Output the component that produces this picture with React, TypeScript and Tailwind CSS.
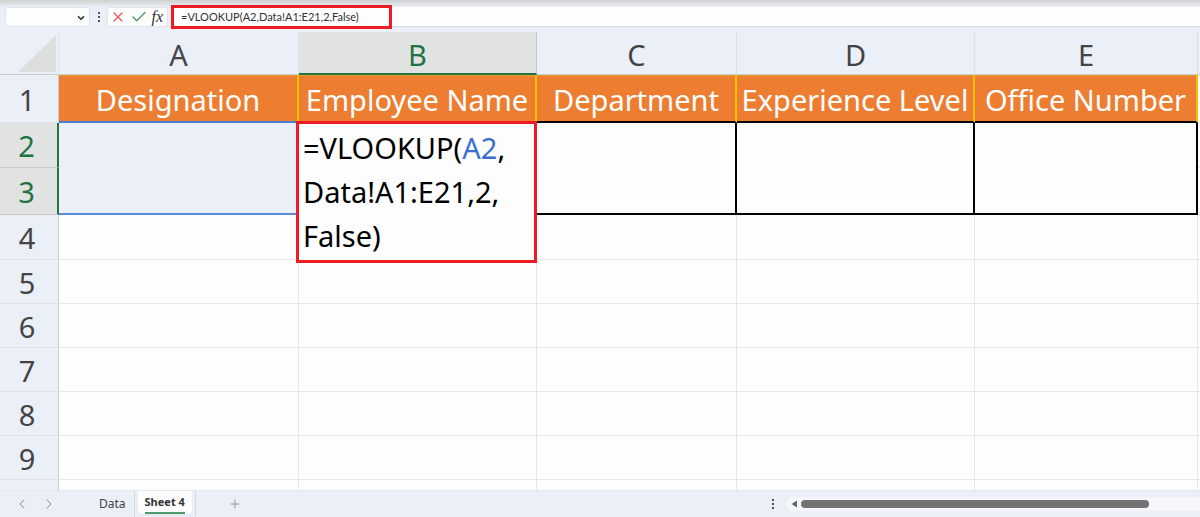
import { Check, ChevronDown, ChevronLeft, ChevronRight, Plus, X } from "lucide-react";

const letters = ["A", "B", "C", "D", "E"];
const titles = ["Designation", "Employee Name", "Department", "Experience Level", "Office Number"];
const emptyRows = [
  { n: "4", h: "h-[45px]" },
  { n: "5", h: "h-11" },
  { n: "6", h: "h-11" },
  { n: "7", h: "h-11" },
  { n: "8", h: "h-11" },
  { n: "9", h: "h-11" },
  { n: "", h: "h-11" },
];

const rowHead = "border-r border-b border-r-[#c9ccce] border-b-[#dfe3e8] bg-[#eaeff8] pt-0.5 pr-1 pb-0 pl-0 text-center font-normal text-[#444]";
const rowHeadActive = "border-b border-b-[#c8cbc9] border-r-2 border-r-[#217346] bg-[#e1e3e2] pt-0.5 pr-1 pb-0 pl-0 text-center font-normal text-[#217346]";

function Dots() {
  return (
    <svg viewBox="0 0 4 12" className="h-3 w-1 shrink-0" fill="#555" aria-hidden="true">
      <rect x="1" y="1" width="2" height="2" />
      <rect x="1" y="5" width="2" height="2" />
      <rect x="1" y="9" width="2" height="2" />
    </svg>
  );
}

function FormulaBar() {
  return (
    <div className="flex shrink-0 items-start bg-[#eaeff8] pb-[5px] pl-[5px]">
      <div className="relative h-5 w-[85px] shrink-0">
        <select aria-label="Name box" className="h-5 w-full appearance-none rounded-[3px] border border-[#e0e3e8] bg-[#fdfdfd]">
          <option></option>
        </select>
        <ChevronDown className="pointer-events-none absolute top-1.5 right-1 size-2.5 text-[#333]" strokeWidth={4} />
      </div>
      <div className="flex h-5 w-[17px] shrink-0 items-center justify-center">
        <Dots />
      </div>
      <div className="flex h-5 w-[61px] shrink-0 items-center justify-between rounded-[3px] border border-[#e0e3e8] bg-[#fdfdfd] px-0.5">
        <button aria-label="Cancel" className="text-[#e8505b]">
          <X className="size-4" strokeWidth={1.8} />
        </button>
        <button aria-label="Enter" className="text-[#4a9a6a]">
          <Check className="size-[18px]" strokeWidth={1.8} />
        </button>
        <button aria-label="Insert function" className="pr-0.5 font-['Liberation_Serif',serif] text-base leading-4 text-[#333] italic">
          fx
        </button>
      </div>
      <div className="relative ml-[3px] min-w-0 flex-1">
        <input
          aria-label="Formula"
          defaultValue="=VLOOKUP(A2,Data!A1:E21,2,False)"
          className="block h-5 w-full border-b border-[#d8dbe0] bg-[#fdfdfd] pl-2.5 font-['Lato',sans-serif] text-[11px] text-[#333] outline-none"
        />
        <div className="pointer-events-none absolute -top-0.5 left-0 h-6 w-[221px] border-[3px] border-[#ed1c24]" />
      </div>
    </div>
  );
}

function CellEditor() {
  return (
    <div className="absolute -top-0.5 -left-[3px] z-10 h-[142px] w-[241px] border-[3px] border-[#ed1c24] bg-[#fdfdfd] pt-0.5 pl-1 text-left text-[29px] leading-11 whitespace-nowrap text-black">
      <div>
        =VLOOKUP(<span className="text-[#3a6fd0]">A2</span>,
      </div>
      <div>Data!A1:E21,2,</div>
      <div>False)</div>
    </div>
  );
}

function Sheet() {
  return (
    <div className="min-h-0 flex-1 overflow-hidden bg-[#fdfdfd]">
      <table className="w-full table-fixed border-separate border-spacing-0 text-[29px] leading-10">
        <colgroup>
          <col className="w-[59px]" />
          <col className="w-[240px]" />
          <col className="w-[238px]" />
          <col className="w-[200px]" />
          <col className="w-[238px]" />
          <col className="w-[223px]" />
          <col />
        </colgroup>
        <thead>
          <tr className="h-[43px]">
            <th className="border-r border-b border-r-[#dfe3e8] border-b-[#c9ccce] bg-[#eaeff8] p-0">
              <svg viewBox="0 0 58 42" className="block h-[42px] w-full" aria-hidden="true">
                <path d="M56 3V40H18Z" fill="#dcdfde" />
              </svg>
            </th>
            {letters.map((l) => (
              <th
                key={l}
                scope="col"
                className={
                  l === "B"
                    ? "border-r border-b-2 border-r-[#c9ccce] border-b-[#217346] bg-[#e1e3e2] px-0 pt-1 pb-0 font-normal text-[#217346]"
                    : "border-r border-b border-r-[#dce0e6] border-b-[#c9ccce] bg-[#eaeff8] px-0 pt-1 pb-0 font-normal text-[#444]"
                }
              >
                <span className="block leading-9">{l}</span>
              </th>
            ))}
            <th className="border-b border-[#c9ccce] bg-[#eaeff8] p-0" />
          </tr>
        </thead>
        <tbody>
          <tr className="h-12">
            <th scope="row" className={rowHead}>1</th>
            {titles.map((t, i) => (
              <td
                key={t}
                className={
                  "border-t border-r-2 border-b-2 border-t-[#e0a02a] border-r-[#ffc000] bg-[#ed7d31] px-0 pt-0.5 pb-0 text-center whitespace-nowrap text-white " +
                  (i === 0 ? "border-b-[#4a7fd0]" : "border-b-black")
                }
              >
                {t}
              </td>
            ))}
            <td className="border-b border-[#e6e6e6] p-0" />
          </tr>
          <tr className="h-[45px]">
            <th scope="row" className={rowHeadActive}>2</th>
            <td rowSpan={2} className="border-b-2 border-[#5b8ad6] bg-[#eaeff8] p-0" />
            <td rowSpan={2} className="relative border-r-2 border-black p-0">
              <CellEditor />
            </td>
            <td rowSpan={2} className="border-r-2 border-b-2 border-black p-0" />
            <td rowSpan={2} className="border-r-2 border-b-2 border-black p-0" />
            <td rowSpan={2} className="border-r-2 border-b-2 border-black p-0" />
            <td className="border-b border-[#e6e6e6] p-0" />
          </tr>
          <tr className="h-[47px]">
            <th scope="row" className={rowHeadActive}>3</th>
            <td className="border-b border-[#e6e6e6] p-0" />
          </tr>
          {emptyRows.map((r) => (
            <tr key={r.n} className={r.h}>
              <th scope="row" className={rowHead}>{r.n}</th>
              {letters.map((l) => (
                <td key={l} className="border-r border-b border-[#e6e6e6] p-0" />
              ))}
              <td className="border-b border-[#e6e6e6] p-0" />
            </tr>
          ))}
        </tbody>
      </table>
    </div>
  );
}

function SheetTabs() {
  return (
    <div className="flex h-[27px] shrink-0 border-t border-[#e3e6ea] bg-[#eaeff8] text-xs">
      <div className="flex flex-1 items-start">
        <div className="flex h-[25px] items-center gap-[11px] pl-3.5 text-[#8a8d92]">
          <button aria-label="Previous sheet"><ChevronLeft className="size-4" strokeWidth={1.5} /></button>
          <button aria-label="Next sheet"><ChevronRight className="size-4" strokeWidth={1.5} /></button>
        </div>
        <button className="ml-[42px] h-[26px] border-r border-[#d3d6db] pr-2 text-[#444]">Data</button>
        <button className="ml-[3px] h-[23px] rounded-b-[4px] bg-[#fdfdfd] px-[7px] text-[11px] font-bold text-[#333] shadow-xs">
          <span className="block border-b-2 border-[#4a9a6a] leading-5">Sheet 4</span>
        </button>
        <button aria-label="New sheet" className="ml-[3px] flex h-[25px] items-center border-l border-[#d3d6db] pl-8 text-[#8a8d92]">
          <Plus className="size-3.5" strokeWidth={1.5} />
        </button>
      </div>
      <div className="flex h-[25px] w-[36%] items-center pl-[3px]">
        <Dots />
        <div className="ml-3 flex h-3.5 flex-1 items-center rounded-l-full bg-[#f5f7fb] pl-1">
          <button aria-label="Scroll left">
            <svg viewBox="0 0 6 8" className="block h-2 w-1.5" fill="#666" aria-hidden="true">
              <path d="M6 0.5V7.5L0.5 4Z" />
            </svg>
          </button>
          <div className="mr-[51px] ml-1 h-2 flex-1 rounded-full bg-[#737373]" />
        </div>
      </div>
    </div>
  );
}

export default function App() {
  return (
    <div className="flex h-screen flex-col overflow-hidden bg-[#eaeff8] font-['Noto_Sans',sans-serif]">
      <div className="h-[7px] shrink-0 bg-linear-to-b from-[#cfd1d0] to-[#eaeff8]" />
      <FormulaBar />
      <Sheet />
      <SheetTabs />
    </div>
  );
}
